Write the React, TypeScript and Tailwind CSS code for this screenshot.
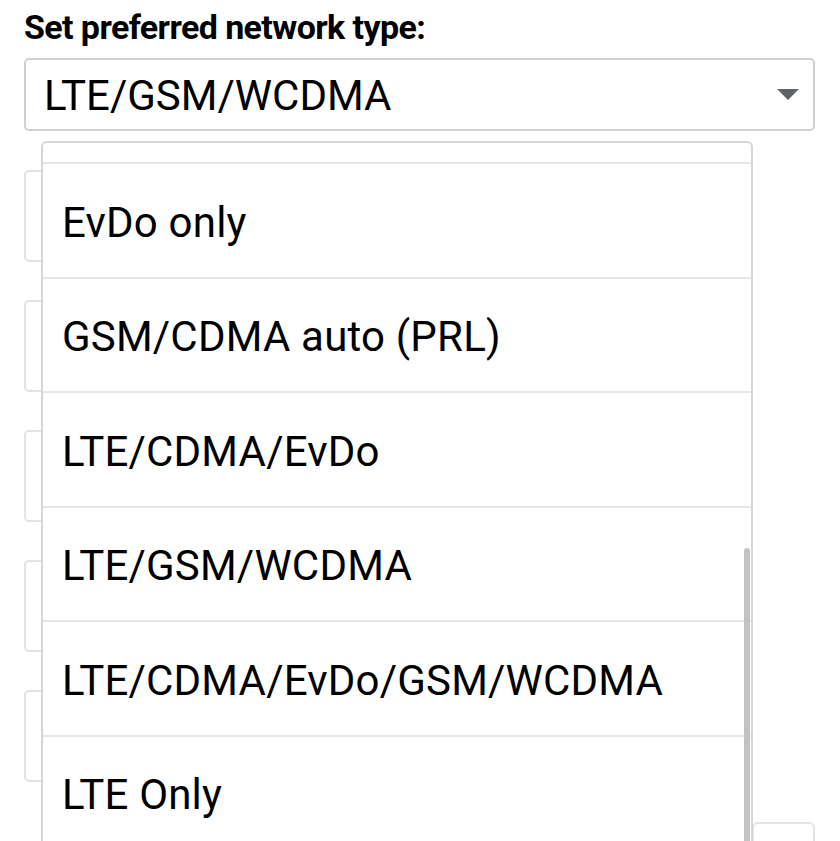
import React from 'react';

const options = [
  'EvDo only',
  'GSM/CDMA auto (PRL)',
  'LTE/CDMA/EvDo',
  'LTE/GSM/WCDMA',
  'LTE/CDMA/EvDo/GSM/WCDMA',
  'LTE Only',
];

export default function App() {
  return (
    <div className="relative h-[841px] w-[840px] overflow-hidden bg-white font-['Roboto',sans-serif] text-black">
      <div className="w-[839px] px-6 pt-[5px]">
        <h1 className="text-[34px] font-bold leading-[44px] tracking-[-0.6px]">Set preferred network type:</h1>
        <div className="mt-[9px] flex h-[73px] items-center justify-between rounded-[5px] border-2 border-[#d0d0d0] pl-[18px] pr-[14px]">
          <span className="pt-[2px] text-[42px] leading-none">LTE/GSM/WCDMA</span>
          <svg width="22" height="11" viewBox="0 0 22 11" className="fill-[#5f6368]">
            <path d="M0 0 L22 0 L11 11 Z" />
          </svg>
        </div>

        {/* fields behind the open list */}
        <div className="mt-[39px] flex flex-col gap-[38px]">
          {[0, 1, 2, 3, 4].map((i) => (
            <div key={i} className="h-[92px] w-[700px] rounded-[5px] border-2 border-[#e2e2e2]" />
          ))}
          <div className="mt-[2px] flex justify-end">
            <div className="h-[40px] w-[63px] rounded-[6px] border-2 border-[#e4e4e4]" />
          </div>
        </div>
      </div>

      {/* open dropdown list */}
      <div className="absolute left-[41px] top-[141px] w-[712px] rounded-t-[6px] border-2 border-b-0 border-[#d6d6d6] bg-white">
        <div className="h-[21px] border-b-2 border-[#e6e6e6]" />
        {options.map((o) => (
          <div key={o} className="flex h-[114.5px] items-center border-b-2 border-[#e6e6e6] pl-[19px] pt-[5px]">
            <span className="text-[42px] leading-none tracking-[0.2px]">{o}</span>
          </div>
        ))}
        <div className="absolute right-[1px] top-[405px] h-[400px] w-[6px] rounded-t-full bg-[#c2c2c2]" />
      </div>
    </div>
  );
}
